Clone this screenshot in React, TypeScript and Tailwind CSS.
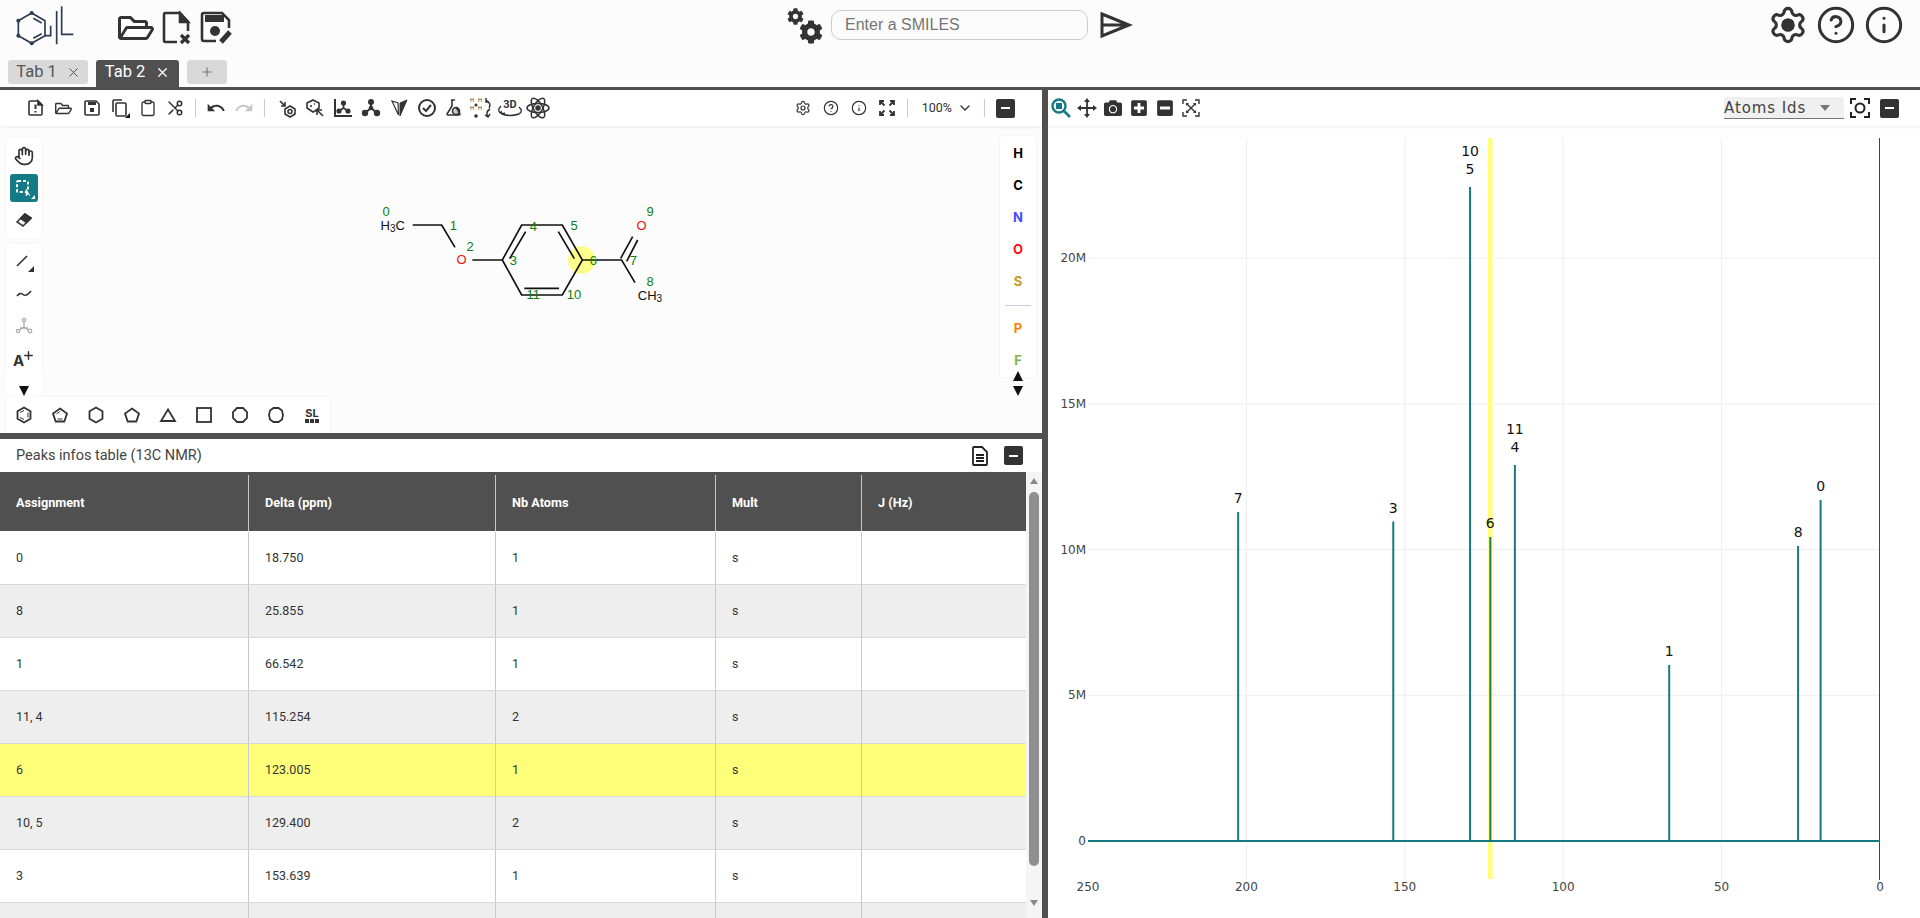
import { ReactNode } from 'react'
import { Hand, CircleHelp, Info, Scissors, Clipboard, Settings, ChevronDown, X, Plus } from 'lucide-react'
import { FaCog, FaRegFolderOpen, FaCamera, FaPlusSquare, FaMinusSquare } from 'react-icons/fa'
import { MdUndo, MdRedo } from 'react-icons/md'

const rows = [
  ['0', '18.750', '1', 's'],
  ['8', '25.855', '1', 's'],
  ['1', '66.542', '1', 's'],
  ['11, 4', '115.254', '2', 's'],
  ['6', '123.005', '1', 's'],
  ['10, 5', '129.400', '2', 's'],
  ['3', '153.639', '1', 's'],
  ['', '', '', ''],
]

const peaks = [
  { ppm: 202.6, top: 512, labels: ['7'] },
  { ppm: 153.639, top: 521.6, labels: ['3'] },
  { ppm: 129.4, top: 187, labels: ['10', '5'] },
  { ppm: 123.005, top: 537, labels: ['6'] },
  { ppm: 115.254, top: 465, labels: ['11', '4'] },
  { ppm: 66.542, top: 665, labels: ['1'] },
  { ppm: 25.855, top: 546, labels: ['8'] },
  { ppm: 18.75, top: 500, labels: ['0'] },
]

const toX = (ppm: number) => 1880 - ppm * 3.168
const dejavu = '"DejaVu Sans", sans-serif'

function Tool({ children }: { children: ReactNode }) {
  return <div className="flex h-7 w-[27.9px] shrink-0 items-center justify-center text-[#333]">{children}</div>
}

function Sep({ className }: { className: string }) {
  return <div className={`h-[18px] w-px bg-[#c3cbdb] ${className}`} />
}

function MinusButton() {
  return (
    <div className="flex h-[19px] w-[19px] items-center justify-center rounded-[2px] bg-[#333]">
      <div className="h-[2px] w-[9px] bg-white" />
    </div>
  )
}

function Logo() {
  return (
    <svg width="60" height="42" viewBox="45 12 180 126" fill="none" stroke="#2c3a52" strokeWidth="5">
      <path d="M95 36 135 59V104L95 127 55 104V59Z" />
      <path d="M100 52 125 66M125 98 100 112" />
      <path d="M135 104H152V74M170 130V30M185 16V100H220" />
      <g fill="#2c3a52" stroke="none">
        <circle cx="95" cy="36" r="6" />
        <circle cx="55" cy="59" r="6" />
        <circle cx="55" cy="104" r="6" />
        <circle cx="95" cy="127" r="6" />
      </g>
    </svg>
  )
}

function FileClose() {
  return (
    <svg width="30" height="34" viewBox="0 0 30 34" fill="none" stroke="#333" strokeWidth="2.6">
      <path d="M18 2H3.5Q2 2 2 3.5V29.5Q2 31 3.5 31H15M18 2 26 11V20" />
      <path d="M18 2V11H26Z" fill="#333" />
      <path d="M19 24 27 32M27 24 19 32" strokeWidth="3.4" />
    </svg>
  )
}

function SaveEdit() {
  return (
    <svg width="33" height="34" viewBox="0 0 33 34" fill="none" stroke="#333" strokeWidth="2.6">
      <path d="M16 30H4Q2 30 2 28V4Q2 2 4 2H22L29 9V17" />
      <rect x="5" y="4" width="19" height="7" fill="#333" stroke="none" />
      <circle cx="15" cy="20" r="5" fill="#333" stroke="none" />
      <path d="M21 31 30 21" strokeWidth="5" />
    </svg>
  )
}

function Gears() {
  return (
    <div className="flex h-9 w-9 flex-col text-[#333]">
      <FaCog size={17} className="self-start" />
      <FaCog size={24} className="mt-[-5px] self-end" />
    </div>
  )
}

function Send() {
  return (
    <svg width="33" height="26" viewBox="0 0 33 26" fill="none" stroke="#333" strokeWidth="3">
      <path d="M2 2 29 13 2 24ZM2 13H28" />
    </svg>
  )
}

function Molecule() {
  const ids: [string, number, number][] = [
    ['0', 48, 63], ['1', 250, 105], ['2', 300, 170], ['3', 430, 210], ['4', 490, 108], ['5', 612, 105],
    ['6', 670, 210], ['7', 790, 210], ['8', 840, 273], ['9', 840, 63], ['10', 612, 313], ['11', 490, 313],
  ]
  return (
    <svg className="absolute left-[370px] top-[64px]" width="300" height="130" viewBox="0 0 900 390">
      <circle cx="635" cy="210" r="41" fill="#fdfd8a" />
      <g fill="none" stroke="#111" strokeWidth="5">
        <path d="M128 105H215L255 172M307 210H397L455 105H577L637 210 577 315H455L397 210" />
        <path d="M467 125 419 206M565 125 613 206M463 295H567" />
        <path d="M637 210H755L795 278M752 205 788 140M770 214 803 150" />
      </g>
      <g fontFamily="Arial, 'Liberation Sans', sans-serif" fontSize="39" dominantBaseline="central" textAnchor="middle">
        <text x="68" y="105" fill="#111">H<tspan fontSize="30" dy="8">3</tspan><tspan dy="-8">C</tspan></text>
        <text x="275" y="208" fill="#f01010">O</text>
        <text x="815" y="105" fill="#f01010">O</text>
        <text x="840" y="315" fill="#111">CH<tspan fontSize="30" dy="8">3</tspan></text>
        {ids.map(([t, x, y]) => (
          <text key={t} x={x} y={y} fill="#0e7f0e">{t}</text>
        ))}
      </g>
    </svg>
  )
}

function TopToolbar() {
  const s = { width: 20, height: 20, viewBox: '0 0 20 20', fill: 'none', stroke: '#333', strokeWidth: 1.6 }
  return (
    <div className="relative z-10 flex h-9 shrink-0 items-center bg-white pl-[22px] pr-[27px] shadow-[0_1px_3px_rgba(0,0,0,0.08)]">
      <Tool>
        <svg {...s}>
          <path d="M3 4Q3 3 4 3H12L16 7V16Q16 17 15 17H4Q3 17 3 16Z" />
          <path d="M9.5 6.5V11M9.5 13V14.5" strokeWidth="2" />
          <path d="M12 3V7H16Z" fill="#333" />
        </svg>
      </Tool>
      <Tool><FaRegFolderOpen size={17} /></Tool>
      <Tool>
        <svg {...s}>
          <path d="M3 4Q3 3 4 3H14L17 6V16Q17 17 16 17H4Q3 17 3 16Z" />
          <rect x="6" y="4" width="8" height="3" fill="#333" stroke="none" />
          <rect x="8" y="10" width="4" height="4" fill="#333" stroke="none" />
        </svg>
      </Tool>
      <Tool>
        <svg {...s}>
          <rect x="6" y="5" width="10" height="13" rx="1" />
          <path d="M3 14V3Q3 2 4 2H12" />
          <path d="M20 15V20H15Z" fill="#111" stroke="none" />
        </svg>
      </Tool>
      <Tool><Clipboard size={18} strokeWidth={1.8} /></Tool>
      <Tool><Scissors size={18} strokeWidth={2} className="-scale-x-100" /></Tool>
      <Sep className="ml-[6px] mr-[6px]" />
      <Tool><MdUndo size={20} /></Tool>
      <Tool><MdRedo size={20} className="text-[#c8c8c8]" /></Tool>
      <Sep className="ml-[6px] mr-2" />
      <Tool>
        <svg {...s}>
          <path d="M13 8 18 11V16L13 19 8 16V11Z" />
          <circle cx="13" cy="13.5" r="2" />
          <path d="M3 3 8 8M4 8H8V4" />
        </svg>
      </Tool>
      <Tool>
        <svg {...s}>
          <path d="M8 2 14 5V10L10 13 8 14 2 10V5Z" />
          <path d="M6 7V9M9 6H10" />
          <path d="M12 12 18 18M12 12V17M12 12H17" />
        </svg>
      </Tool>
      <Tool>
        <svg {...s}>
          <path d="M2 1V18H19" strokeWidth="2" />
          <path d="M10.5 4V10L6 13M10.5 10 15 13" />
          <circle cx="10.5" cy="5" r="1.8" fill="#333" />
          <circle cx="6" cy="13" r="1.8" fill="#333" />
          <circle cx="15" cy="13" r="1.8" fill="#333" />
        </svg>
      </Tool>
      <Tool>
        <svg {...s}>
          <path d="M10 3V10L4 15M10 10 16 15" strokeWidth="2" />
          <circle cx="10" cy="4" r="2.2" fill="#333" />
          <circle cx="4" cy="15" r="2.4" fill="#333" />
          <circle cx="16" cy="15" r="2.4" fill="#333" />
          <circle cx="10" cy="10" r="1.5" fill="#333" />
        </svg>
      </Tool>
      <Tool>
        <svg {...s}>
          <path d="M3 3 9 5 9.5 17Z" strokeWidth="1.2" />
          <path d="M11 5 18 2 11 18Z" fill="#333" strokeWidth="1" />
        </svg>
      </Tool>
      <Tool>
        <svg {...s} strokeWidth={2}>
          <circle cx="10" cy="10" r="8" />
          <path d="M6 10 9 13 14 7" />
        </svg>
      </Tool>
      <Tool>
        <svg {...s}>
          <path d="M7 2H11M8 2V8L3 16Q3 17 4 17H15Q16 17 16 16L12 9" />
          <circle cx="12" cy="13" r="3.5" fill="#333" fillOpacity="0.25" />
        </svg>
      </Tool>
      <Tool>
        <svg width="24" height="24" viewBox="0 0 24 24" fill="none" stroke="#333" strokeWidth="1.5">
          <g fontFamily='"Liberation Sans", sans-serif' fontSize="5.5" fill="#333" stroke="none">
            <text x="0" y="6">H</text>
            <text x="8" y="6">H</text>
            <text x="0" y="14">H</text>
            <text x="8" y="14">H</text>
          </g>
          <circle cx="6" cy="9" r="1.5" fill="#333" stroke="none" />
          <circle cx="6" cy="20" r="1.8" fill="#333" stroke="none" />
          <path d="M16 4Q22 8 19 12M20 13Q15 16 18 21M16 2V6H19M20 18 18 21 15 19" />
        </svg>
      </Tool>
      <Tool>
        <svg width="28" height="24" viewBox="0 0 28 24" fill="none" stroke="#333" strokeWidth="1.4">
          <text x="14" y="12" textAnchor="middle" fontFamily="Roboto, sans-serif" fontWeight="700" fontSize="11" fill="#333" stroke="none">3D</text>
          <path d="M5 10Q0 15 6 18Q14 21 23 18Q28 15 23 11M5 15 6 18 9 17" />
        </svg>
      </Tool>
      <Tool>
        <svg width="24" height="24" viewBox="0 0 24 24" fill="none" stroke="#333" strokeWidth="1.5">
          <ellipse cx="12" cy="12" rx="11" ry="4.5" />
          <ellipse cx="12" cy="12" rx="11" ry="4.5" transform="rotate(60 12 12)" />
          <ellipse cx="12" cy="12" rx="11" ry="4.5" transform="rotate(120 12 12)" />
          <circle cx="12" cy="12" r="2" fill="#333" />
        </svg>
      </Tool>

      <div className="ml-auto flex items-center">
        <Tool><Settings size={16} strokeWidth={1.8} /></Tool>
        <Tool><CircleHelp size={16} strokeWidth={1.8} /></Tool>
        <Tool><Info size={16} strokeWidth={1.8} /></Tool>
        <Tool>
          <svg {...s} strokeWidth={1.8}>
            <path d="M7 3H3V7M3 3 7.5 7.5M13 3H17V7M17 3 12.5 7.5M3 13V17H7M3 17 7.5 12.5M17 13V17H13M17 17 12.5 12.5" />
          </svg>
        </Tool>
        <Sep className="ml-[6px]" />
        <span className="ml-[14px] font-['Roboto',sans-serif] text-[12.5px] leading-none text-[#333]">100%</span>
        <ChevronDown size={16} strokeWidth={2} className="ml-[5px] text-[#333]" />
        <Sep className="ml-[11px]" />
        <div className="ml-[11px]"><MinusButton /></div>
      </div>
    </div>
  )
}

function SideTool({ children, active }: { children: ReactNode; active?: boolean }) {
  return (
    <div className={`relative flex h-7 w-7 items-center justify-center rounded-[3px] ${active ? 'bg-[#147a85] text-white' : 'text-[#333]'}`}>
      {children}
    </div>
  )
}

function LeftPalette() {
  return (
    <div className="absolute left-[6px] top-[12px] flex w-9 flex-col items-center">
      <div className="flex h-[100px] w-9 flex-col items-center justify-center gap-1 rounded-[4px] bg-white shadow-[0_0_3px_rgba(0,0,0,0.06)]">
        <SideTool><Hand size={20} strokeWidth={2} /></SideTool>
        <SideTool active>
          <svg width="22" height="22" viewBox="0 0 22 22" fill="none" stroke="#fff" strokeWidth="2">
            <rect x="4" y="4" width="11" height="11" rx="1" strokeDasharray="3 2" />
            <path d="M13 12V19L15 17 17 19Z" fill="#fff" strokeWidth="0.5" />
            <path d="M22 18V22H18Z" fill="#fff" stroke="none" />
          </svg>
        </SideTool>
        <SideTool>
          <svg width="18" height="18" viewBox="0 0 18 18" fill="none" stroke="#333" strokeWidth="1.6">
            <path d="M2 11 10 3 16 7 8 15Z" />
            <path d="M5.5 7.5 10 3 16 7 11.5 11.5Z" fill="#333" />
          </svg>
        </SideTool>
      </div>
      <div className="mt-[6px] flex w-9 flex-col items-center gap-1 rounded-t-[4px] bg-white pt-[4px] shadow-[0_0_3px_rgba(0,0,0,0.06)]">
        <SideTool>
          <svg width="22" height="22" viewBox="0 0 22 22" fill="none" stroke="#333" strokeWidth="1.6">
            <path d="M4 15 14 5" />
            <path d="M21 15V21H15Z" fill="#333" stroke="none" />
          </svg>
        </SideTool>
        <SideTool>
          <svg width="18" height="18" viewBox="0 0 18 18" fill="none" stroke="#333" strokeWidth="1.6">
            <path d="M2 11Q5 7 8 9.5T16 6" />
          </svg>
        </SideTool>
        <SideTool>
          <svg width="18" height="18" viewBox="0 0 18 18" fill="none" stroke="#aaa" strokeWidth="1.3">
            <circle cx="9" cy="3" r="1.6" />
            <circle cx="3" cy="14" r="1.6" />
            <circle cx="15" cy="14" r="1.8" />
            <path d="M9 5V10L4.5 13M9 10 13 13M5 11H13" />
          </svg>
        </SideTool>
        <SideTool>
          <div className="flex items-start text-[#333]">
            <span className="mt-[4px] font-['Inter',sans-serif] text-[15px] font-bold leading-none">A</span>
            <Plus size={13} strokeWidth={2.6} className="-ml-[2px]" />
          </div>
        </SideTool>
      </div>
      <div className="flex h-[32px] w-9 items-center justify-center bg-white pt-[6px]">
        <svg width="12" height="10" viewBox="0 0 12 10"><path d="M1 0H11L6 10Z" fill="#111" /></svg>
      </div>
    </div>
  )
}

function RightPalette() {
  const els: [string, string][] = [['H', 'text-black'], ['C', 'text-black'], ['N', 'text-[#4a4aff]'], ['O', 'text-[#ff0d1d]'], ['S', 'text-[#c9992b]']]
  const base = "flex h-8 shrink-0 items-center justify-center font-['Inter',sans-serif] text-[13px] font-bold"
  return (
    <div className="absolute right-[6px] top-[10px] flex w-9 flex-col">
      <div className="flex h-[241px] flex-col rounded-t-[4px] bg-white pt-[2px] shadow-[0_0_3px_rgba(0,0,0,0.06)]">
        {els.map(([e, c]) => (
          <div key={e} className={`${base} ${c}`}>{e}</div>
        ))}
        <div className="mx-[5px] my-[7px] h-px shrink-0 bg-[#c6cfdb]" />
        <div className={`${base} text-[#ff8000]`}>P</div>
        <div className={`${base} text-[#7ab648]`}>F</div>
      </div>
      <div className="-mt-[7px] flex h-[26px] flex-col items-center justify-center gap-[5px] bg-transparent">
        <svg width="12" height="10" viewBox="0 0 12 10"><path d="M1 10H11L6 0Z" fill="#111" /></svg>
        <svg width="12" height="10" viewBox="0 0 12 10"><path d="M1 0H11L6 10Z" fill="#111" /></svg>
      </div>
    </div>
  )
}

function RingBar() {
  const p = { width: 18, height: 18, viewBox: '0 0 18 18', fill: 'none', stroke: '#333', strokeWidth: 1.8 }
  const items = [
    <svg {...p}><path d="M9 1.5 15.5 5.2V12.8L9 16.5 2.5 12.8V5.2Z" /><path d="M5 6.5 9 4.5M13 6.5V11.5M5 11.5 9 13.5" strokeWidth="1" /></svg>,
    <svg {...p}><path d="M9 2.5 16 7.5 13.3 15.5H4.7L2 7.5Z" /><path d="M5.5 8 9 5.5M6.5 13H11.5" strokeWidth="1" /></svg>,
    <svg {...p}><path d="M9 1.5 15.5 5.2V12.8L9 16.5 2.5 12.8V5.2Z" /></svg>,
    <svg {...p}><path d="M9 2.5 16 7.5 13.3 15.5H4.7L2 7.5Z" /></svg>,
    <svg {...p}><path d="M9 3.5 16 15H2Z" /></svg>,
    <svg {...p}><rect x="2" y="2" width="14" height="14" /></svg>,
    <svg {...p}><path d="M6 2H12L16 6V12L12 16H6L2 12V6Z" /></svg>,
    <svg {...p}><path d="M6.5 2H11.5L15 4.5 16 9 15 13.5 11.5 16H6.5L3 13.5 2 9 3 4.5Z" /></svg>,
  ]
  return (
    <div className="absolute bottom-0 left-[6px] flex h-9 w-[324px] items-center rounded-[4px] bg-white shadow-[0_0_3px_rgba(0,0,0,0.06)]">
      {items.map((icon, i) => (
        <div key={i} className="flex h-9 w-9 items-center justify-center">{icon}</div>
      ))}
      <div className="flex h-9 w-9 flex-col items-center justify-center text-[#333]">
        <span className="font-['Inter',sans-serif] text-[11px] font-bold leading-[11px]">SL</span>
        <div className="flex gap-[1px]">
          <div className="h-[4px] w-[4px] bg-[#333]" />
          <div className="h-[4px] w-[4px] bg-[#333]" />
          <div className="h-[4px] w-[4px] bg-[#333]" />
        </div>
      </div>
    </div>
  )
}

function PeakTable() {
  const cols = 'grid grid-cols-[249px_247px_220px_146px_164px]'
  return (
    <div className="flex min-h-0 flex-1">
      <div className="w-[1026px] font-['Roboto',sans-serif] text-[12.5px]">
        <div className={`${cols} h-[59px] bg-[#505050] pt-[3px] text-[12.7px] font-bold text-white`}>
          {['Assignment', 'Delta (ppm)', 'Nb Atoms', 'Mult', 'J (Hz)'].map((h, i) => (
            <div key={h} className={`flex items-center pl-4 ${i < 4 ? 'border-r border-[#c8c8c8]' : ''}`}>{h}</div>
          ))}
        </div>
        <div className="h-px bg-white" />
        {rows.map((r, i) => (
          <div
            key={i}
            className={`${cols} h-[53px] border-b border-[#d8d8d8] text-[#333] ${r[0] === '6' ? 'bg-[#ffff7a]' : i % 2 ? 'bg-[#eeeeee]' : 'bg-white'}`}
          >
            {[...r, ''].map((c, j) => (
              <div key={j} className={`flex items-center pl-4 ${j < 4 ? 'border-r border-[#c8c8c8]' : ''}`}>{c}</div>
            ))}
          </div>
        ))}
      </div>
      <div className="flex w-4 flex-col items-center bg-[#f5f5f5]">
        <svg className="mt-[2px]" width="8" height="14" viewBox="0 0 8 14"><path d="M0 10H8L4 4Z" fill="#8a8a8a" /></svg>
        <div className="mt-[4px] h-[374px] w-[10px] rounded-[5px] bg-[#8f8f8f]" />
        <svg className="mt-[30px]" width="8" height="14" viewBox="0 0 8 14"><path d="M0 4H8L4 10Z" fill="#8a8a8a" /></svg>
      </div>
    </div>
  )
}

function ChartToolbar() {
  return (
    <div className="relative z-10 flex h-9 shrink-0 items-center bg-white pr-[21px] shadow-[0_1px_3px_rgba(0,0,0,0.08)]">
      {[
        <svg width="20" height="20" viewBox="0 0 20 20" fill="none" stroke="#147a85">
          <circle cx="8" cy="8" r="6.5" strokeWidth="2.4" />
          <rect x="5" y="5" width="6" height="6" fill="#147a85" stroke="none" />
          <path d="M13 13 19 19" strokeWidth="2.6" />
        </svg>,
        <svg width="20" height="20" viewBox="0 0 20 20" fill="#333" stroke="#333" strokeWidth="1.8">
          <path d="M10 2V18M2 10H18" />
          <path d="M10 0 13 4H7ZM10 20 13 16H7ZM0 10 4 7V13ZM20 10 16 7V13Z" stroke="none" />
        </svg>,
        <FaCamera size={18} className="text-[#333]" />,
        <FaPlusSquare size={18} className="text-[#333]" />,
        <FaMinusSquare size={18} className="text-[#333]" />,
        <svg width="18" height="18" viewBox="0 0 18 18" fill="none" stroke="#333" strokeWidth="1.4">
          <path d="M1 5V1H5M13 1H17V5M1 13V17H5M13 17H17V13" />
          <path d="M5 5 13 13M13 5 5 13" />
          <path d="M4 4H7L4 7ZM14 4H11L14 7ZM4 14H7L4 11ZM14 14H11L14 11Z" fill="#333" stroke="none" />
        </svg>,
      ].map((icon, i) => (
        <div key={i} className="flex h-7 w-[26px] items-center justify-center">{icon}</div>
      ))}
      <div className="ml-auto flex h-[22px] w-[120px] items-center justify-between rounded-t-[3px] border-b border-[#777] bg-[#f0f0f0] pr-[14px] pt-px font-['DejaVu_Sans',sans-serif] text-[15px] tracking-[0.9px] text-[#444]">
        Atoms Ids
        <svg width="10" height="6" viewBox="0 0 10 6"><path d="M0 0H10L5 6Z" fill="#777" /></svg>
      </div>
      <svg className="ml-[6px]" width="20" height="20" viewBox="0 0 20 20" fill="none" stroke="#222" strokeWidth="2">
        <path d="M1 6V1H6M14 1H19V6M1 14V19H6M14 19H19V14" />
        <circle cx="10" cy="10" r="4.5" />
      </svg>
      <div className="ml-[10px]"><MinusButton /></div>
    </div>
  )
}

function Chart() {
  return (
    <svg width="872" height="792" viewBox="1048 126 872 792" className="block" fontFamily={dejavu}>
      {[50, 100, 150, 200].map((v) => (
        <line key={v} x1={toX(v)} x2={toX(v)} y1="138" y2="880" stroke="#eeeeee" />
      ))}
      {[1, 2, 3, 4].map((v) => (
        <line key={v} x1="1088" x2="1880" y1={841 - v * 145.75} y2={841 - v * 145.75} stroke="#eeeeee" />
      ))}
      <line x1="1879.5" x2="1879.5" y1="138" y2="880" stroke="#444" />
      <rect x="1488" y="138" width="4.5" height="741" fill="#ffff7a" />
      <line x1="1088" x2="1880" y1="841" y2="841" stroke="#147a80" strokeWidth="2" />
      {peaks.map((p) => (
        <g key={p.ppm}>
          <line x1={toX(p.ppm)} x2={toX(p.ppm)} y1={p.top} y2="841" stroke="#147a80" strokeWidth="2" />
          {p.labels.map((l, i) => {
            const two = p.labels.length === 2
            const y = two ? p.top - 36 + i * 18 : p.top - 14
            return (
              <text key={l} x={toX(p.ppm)} y={y} fontSize="14" textAnchor="middle" dominantBaseline="central" fill="#111">{l}</text>
            )
          })}
        </g>
      ))}
      {[['20M', 4], ['15M', 3], ['10M', 2], ['5M', 1], ['0', 0]].map(([t, v]) => (
        <text key={t} x="1086" y={841 - (v as number) * 145.75} fontSize="12" textAnchor="end" dominantBaseline="central" fill="#444">{t}</text>
      ))}
      {[250, 200, 150, 100, 50, 0].map((v) => (
        <text key={v} x={toX(v)} y="887" fontSize="12" textAnchor="middle" dominantBaseline="central" fill="#444">{v}</text>
      ))}
    </svg>
  )
}

export default function App() {
  return (
    <div className="flex h-[918px] w-full flex-col overflow-hidden bg-white font-['Roboto',sans-serif]">
      <div className="h-[90px] shrink-0 border-b-[3px] border-[#505050] bg-[#fcfcfc]">
        <div className="flex h-[60px] items-start pt-[5px]">
          <div className="ml-[15px] w-[103px]"><Logo /></div>
          <div className="mt-[5px] flex items-center gap-[8px] text-[#333]">
            <FaRegFolderOpen size={36} />
            <FileClose />
            <SaveEdit />
          </div>
          <div className="ml-[554px] mt-[3px]"><Gears /></div>
          <input
            placeholder="Enter a SMILES"
            className="ml-[8px] mt-[5px] h-[30px] w-[257px] rounded-[10px] border border-[#ccc] bg-transparent px-[13px] font-['Liberation_Sans',sans-serif] text-[16px] outline-none placeholder:text-[#757575]"
          />
          <div className="ml-[12px] mt-[7px]"><Send /></div>
          <div className="ml-auto mr-[16px] flex items-center gap-[8px] text-[#333]">
            <Settings size={40} strokeWidth={1.9}>
              <circle cx="12" cy="12" r="3" fill="#333" />
            </Settings>
            <CircleHelp size={40} strokeWidth={1.8} />
            <Info size={40} strokeWidth={1.8} />
          </div>
        </div>
        <div className="flex h-[27px] items-start gap-2 pl-2 text-[16.5px]">
          <div className="flex h-6 w-20 items-center justify-center gap-[9px] rounded-[3px] bg-[#d9d9d9] pl-px pt-px text-[#555]">
            Tab 1 <X size={15} strokeWidth={1.6} />
          </div>
          <div className="flex h-[27px] w-[83px] items-center justify-center gap-[10px] rounded-t-[3px] bg-[#505050] pb-[2px] text-white">
            Tab 2 <X size={15} strokeWidth={2} />
          </div>
          <div className="flex h-6 w-10 items-center justify-center rounded-[3px] bg-[#d9d9d9] text-[#666]">
            <Plus size={14} strokeWidth={1.6} />
          </div>
        </div>
      </div>

      <div className="flex min-h-0 flex-1">
        <div className="flex w-[1048px] shrink-0 flex-col border-r-[6px] border-[#505050]">
          <TopToolbar />
          <div className="relative h-[307px] shrink-0 bg-[#fcfcfc]">
            <Molecule />
            <LeftPalette />
            <RightPalette />
            <RingBar />
          </div>
          <div className="h-[6px] shrink-0 bg-[#505050]" />
          <div className="flex h-[33px] shrink-0 items-center bg-white pl-4 pr-[19px] text-[14.5px] text-[#444]">
            Peaks infos table (13C NMR)
            <div className="ml-auto flex items-center gap-[15px]">
              <svg width="18" height="20" viewBox="0 0 18 20" fill="none" stroke="#222" strokeWidth="1.8">
                <path d="M2 2Q2 1 3 1H11L16 6V18Q16 19 15 19H3Q2 19 2 18Z" />
                <path d="M5 9H13M5 12H13M5 15H13" />
              </svg>
              <MinusButton />
            </div>
          </div>
          <PeakTable />
        </div>
        <div className="flex min-w-0 flex-1 flex-col bg-white">
          <ChartToolbar />
          <Chart />
        </div>
      </div>
    </div>
  )
}
